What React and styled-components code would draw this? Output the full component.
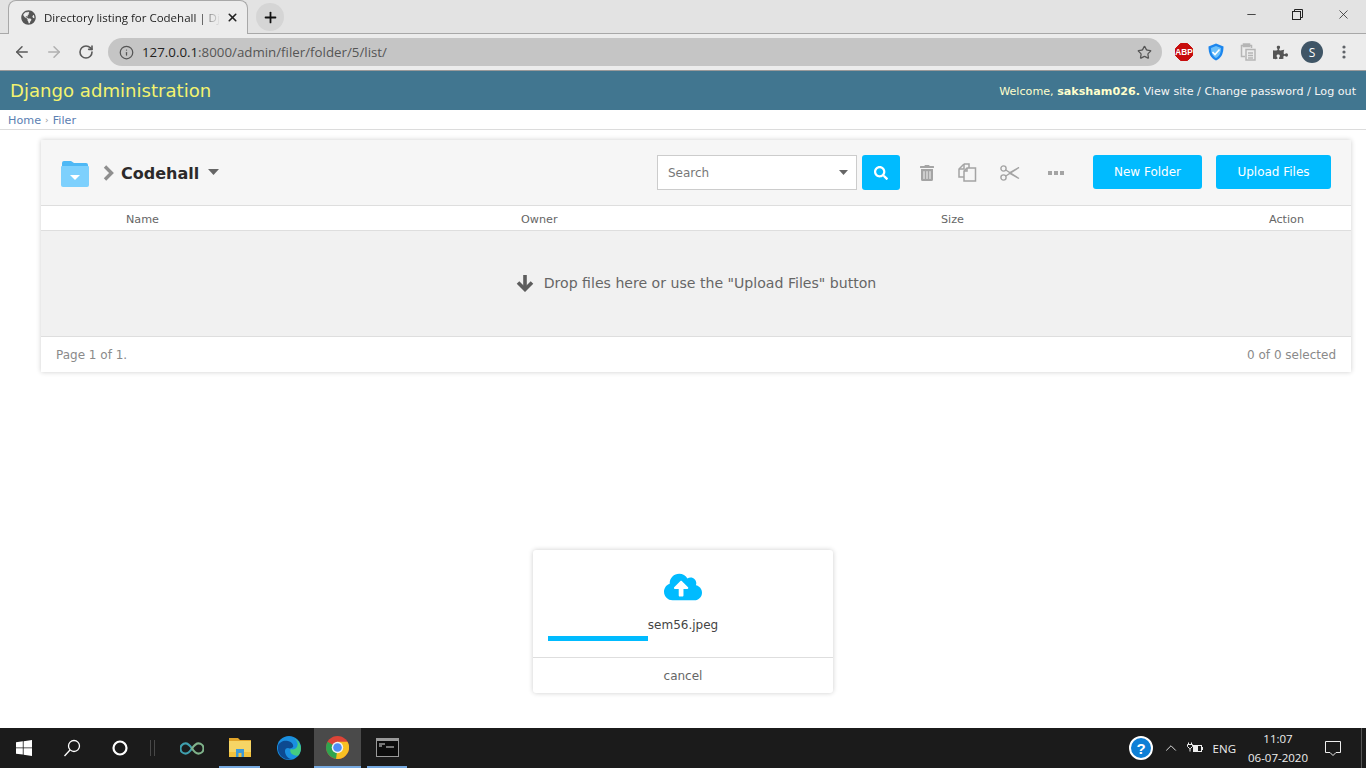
import React from 'react';
import styled, { createGlobalStyle } from 'styled-components';
import { ArrowLeft, ArrowRight, RotateCw, Info, Star, X, Plus, Minus, ChevronUp } from 'lucide-react';
import { FaGlobeAmericas, FaPuzzlePiece, FaTrashAlt, FaSearch, FaCloudUploadAlt } from 'react-icons/fa';

const GlobalStyle = createGlobalStyle`
  html, body { margin: 0; padding: 0; background: #fff; overflow: hidden; }
  * { box-sizing: border-box; }
`;

const Page = styled.div`
  position: relative;
  width: 1366px;
  height: 768px;
  display: flex;
  flex-direction: column;
  font-family: "DejaVu Sans", Verdana, sans-serif;
`;

/* browser chrome */
const TabStrip = styled.div`
  height: 34px;
  background: #e3e3e3;
  border-bottom: 1px solid #a8a8a8;
  display: flex;
  align-items: flex-end;
  padding-left: 8px;
`;
const Tab = styled.div`
  width: 240px;
  height: 34px;
  margin-bottom: -1px;
  background: #ececec;
  border: 1px solid #a8a8a8;
  border-bottom: none;
  border-radius: 8px 8px 0 0;
  display: flex;
  align-items: center;
  padding: 0 8px 0 12px;
  color: #222;
`;
const TabTitle = styled.span`
  flex: 1;
  margin: 0 6px 0 8px;
  font: 11.5px "Open Sans", "Noto Sans", sans-serif;
  white-space: nowrap;
  overflow: hidden;
  mask-image: linear-gradient(to right, #000 88%, transparent);
`;
const NewTab = styled.div`
  width: 28px;
  height: 28px;
  border-radius: 50%;
  background: #d5d5d5;
  margin: 0 0 2px 8px;
  display: flex;
  align-items: center;
  justify-content: center;
  color: #111;
`;
const WindowControls = styled.div`
  margin-left: auto;
  height: 33px;
  display: flex;
  align-items: flex-start;
  color: #222;
`;
const WindowButton = styled.div`
  width: 46px;
  height: 28px;
  display: flex;
  align-items: center;
  justify-content: center;
`;
const Toolbar = styled.div`
  height: 37px;
  background: #ececec;
  border-bottom: 1px solid #9a9a9a;
  display: flex;
  align-items: center;
  padding-left: 6px;
  color: #5f6368;
`;
const NavButton = styled.div`
  width: 32px;
  display: flex;
  justify-content: center;
  color: ${p => (p.$off ? '#b0b0b0' : '#5a5a5a')};
`;
const AddressBar = styled.div`
  width: 1054px;
  height: 28px;
  margin-left: 6px;
  border-radius: 14px;
  background: #c5c5c5;
  display: flex;
  align-items: center;
  padding: 0 10px 0 11px;
  font: 13.3px "Open Sans", "Noto Sans", sans-serif;
  color: #555;
`;
const Url = styled.span`
  flex: 1;
  margin-left: 8px;
  b { font-weight: 400; color: #222; }
`;
const Extensions = styled.div`
  display: flex;
  align-items: center;
  margin-left: 6px;
`;
const ExtSlot = styled.div`
  width: 32px;
  height: 24px;
  display: flex;
  align-items: center;
  justify-content: center;
`;
const Avatar = styled.div`
  width: 22px;
  height: 22px;
  border-radius: 50%;
  background: #3f5566;
  color: #fff;
  font: 12px "Open Sans", sans-serif;
  display: flex;
  align-items: center;
  justify-content: center;
`;

/* django header */
const Header = styled.header`
  height: 39px;
  background: #417690;
  display: flex;
  align-items: center;
  justify-content: space-between;
  padding: 0 10px;
`;
const Brand = styled.div`
  font-size: 18.1px;
  color: #f3f36f;
`;
const UserTools = styled.div`
  padding-top: 1px;
  font-size: 11.15px;
  color: #ffffcc;
  b { font-weight: 700; }
  span { color: #f5f5f5; }
`;
const Breadcrumbs = styled.nav`
  height: 20px;
  padding: 1px 0 0 8px;
  background: #fff;
  border-bottom: 1px solid #dcdcdc;
  display: flex;
  align-items: center;
  font-size: 11.2px;
  color: #5b80b2;
  i { font-style: normal; color: #999; margin: 0 4px; font-size: 9px; }
`;

/* filer panel */
const Main = styled.main`
  flex: 1;
  padding: 10px 15px 0 41px;
`;
const Panel = styled.section`
  background: #fff;
  box-shadow: 0 0 5px rgba(0, 0, 0, 0.2);
`;
const PanelTop = styled.div`
  height: 66px;
  background: #f6f6f6;
  border-bottom: 1px solid #dedede;
  display: flex;
  align-items: center;
  padding: 0 20px 0 19px;
`;
const FolderName = styled.div`
  margin-left: 7px;
  padding-top: 1px;
  font-size: 16px;
  font-weight: 700;
  color: #2c2a2a;
`;
const Chevron = styled.svg`
  margin-left: 13px;
`;
const NameCaret = styled.div`
  margin-left: 9px;
  display: flex;
`;
const Tools = styled.div`
  margin-left: auto;
  align-self: flex-start;
  padding-top: 15px;
  display: flex;
  align-items: flex-start;
`;
const SearchBox = styled.div`
  width: 200px;
  height: 35px;
  background: #fff;
  border: 1px solid #ccc;
  display: flex;
  align-items: center;
  justify-content: space-between;
  padding: 0 8px 0 10px;
  font-size: 12px;
  color: #777;
`;
const SearchButton = styled.div`
  width: 38px;
  height: 35px;
  margin-left: 5px;
  border-radius: 3px;
  background: #00bbff;
  color: #fff;
  display: flex;
  align-items: center;
  justify-content: center;
`;
const IconTools = styled.div`
  height: 35px;
  display: flex;
  align-items: center;
  margin: 0 13px 0 8px;
`;
const IconTool = styled.div`
  width: ${p => p.$w}px;
  display: flex;
  justify-content: center;
  color: #a4a4a4;
`;
const BlueButton = styled.div`
  width: ${p => p.$w}px;
  height: 34px;
  margin-left: ${p => p.$gap || 0}px;
  border-radius: 3px;
  background: #00bbff;
  color: #fff;
  font-size: 12px;
  display: flex;
  align-items: center;
  justify-content: center;
`;
const Columns = styled.div`
  height: 25px;
  padding-top: 2px;
  border-bottom: 1px solid #dedede;
  display: grid;
  grid-template-columns: 85px 395px 420px 328px 1fr;
  align-items: center;
  font-size: 11.2px;
  color: #666;
`;
const DropZone = styled.div`
  height: 106px;
  padding-bottom: 2px;
  background: #f1f1f1;
  border-bottom: 1px solid #dedede;
  display: flex;
  align-items: center;
  justify-content: center;
  gap: 10px;
  font-size: 14.1px;
  color: #666;
`;
const PanelFooter = styled.div`
  height: 35px;
  display: flex;
  align-items: center;
  justify-content: space-between;
  padding: 0 15px;
  font-size: 12px;
  color: #8a8a8a;
`;

/* upload popup, lies over the page */
const UploadCard = styled.div`
  position: absolute;
  left: 533px;
  top: 550px;
  width: 300px;
  height: 143px;
  background: #fff;
  border-radius: 3px;
  box-shadow: 0 0 5px rgba(0, 0, 0, 0.2);
  display: flex;
  flex-direction: column;
`;
const UploadBody = styled.div`
  height: 108px;
  border-bottom: 1px solid #dedede;
  padding: 18px 15px 0;
  display: flex;
  flex-direction: column;
  align-items: center;
  color: #00bbff;
`;
const FileName = styled.div`
  margin-top: 12px;
  font-size: 12px;
  color: #444;
`;
const ProgressTrack = styled.div`
  align-self: stretch;
  height: 5px;
  margin-top: 4px;
`;
const ProgressFill = styled.div`
  height: 100%;
  background: #00bbff;
`;
const Cancel = styled.div`
  flex: 1;
  display: flex;
  align-items: center;
  justify-content: center;
  font-size: 12px;
  color: #666;
`;

/* windows taskbar */
const Taskbar = styled.footer`
  height: 40px;
  background: #1b1b1b;
  display: flex;
  align-items: stretch;
  color: #fff;
`;
const TaskItem = styled.div`
  width: ${p => p.$w || 48}px;
  padding-left: ${p => p.$pad || 0}px;
  display: flex;
  align-items: center;
  justify-content: center;
  background: ${p => (p.$active ? '#4a4a4a' : 'transparent')};
  border-bottom: ${p => (p.$open ? '2px solid #76a9e0' : 'none')};
`;
const TaskSeparator = styled.div`
  width: 21px;
  padding-left: 6px;
  display: flex;
  align-items: center;
  &::before {
    content: '';
    width: 3px;
    height: 16px;
    border-left: 1px solid #484848;
    border-right: 1px solid #484848;
  }
`;
const TaskGap = styled.div`
  width: 6px;
`;
const Tray = styled.div`
  margin-left: auto;
  display: flex;
  align-items: center;
  font: 11.5px "Open Sans", "Noto Sans", sans-serif;
  color: #eee;
`;
const TrayChevron = styled.div`
  width: 32px;
  margin-left: 2px;
  display: flex;
  justify-content: center;
`;
const Lang = styled.span`
  margin-left: 10px;
`;
const Clock = styled.div`
  width: 64px;
  margin-left: 10px;
  text-align: center;
  line-height: 19px;
`;
const ShowDesktop = styled.div`
  width: 1px;
  height: 40px;
  margin: 0 4px 0 5px;
  background: #555;
`;

const FolderIcon = () => (
  <svg width="30" height="30" viewBox="0 0 30 30">
    <path d="M2 5a2 2 0 0 1 2-2h7l3 2h12a2 2 0 0 1 2 2v2H2z" fill="#4eb8f5" />
    <path d="M2 8h26a1 1 0 0 1 1 1v18a2 2 0 0 1-2 2H3a2 2 0 0 1-2-2V9a1 1 0 0 1 1-1z" fill="#7dd0fd" />
    <path d="M10 17h10l-5 5z" fill="#fff" />
  </svg>
);

const CopyIcon = () => (
  <svg width="19" height="19" viewBox="0 0 19 19" fill="none" stroke="#a4a4a4" strokeWidth="1.5">
    <path d="M6 1L1 6v8h5" />
    <path d="M6 1v5H1" />
    <path d="M6 1h5v4" />
    <path d="M9 5h8.500v13H6V8z" />
    <path d="M9 5v3H6" />
  </svg>
);

const ScissorsIcon = () => (
  <svg width="20" height="16" viewBox="0 0 20 16" fill="none" stroke="#a4a4a4" strokeWidth="1.4">
    <circle cx="3.500" cy="3.500" r="2.600" />
    <circle cx="3.500" cy="12.500" r="2.600" />
    <path d="M5.800 5L19 13.500 9 8" />
    <path d="M5.800 11L19 2.500 9 8" />
  </svg>
);

const DotsIcon = () => (
  <svg width="16" height="4" viewBox="0 0 16 4" fill="#a4a4a4">
    <rect width="4" height="4" />
    <rect x="6" width="4" height="4" />
    <rect x="12" width="4" height="4" />
  </svg>
);

const DownArrow = () => (
  <svg width="18" height="18" viewBox="0 0 18 18" fill="none" stroke="#5d5d5d" strokeWidth="3.600">
    <path d="M9 1v14" />
    <path d="M2 8.500l7 7 7-7" />
  </svg>
);

const Caret = ({ w = 11 }) => (
  <svg width={w} height={w * 0.55} viewBox="0 0 10 5.500" fill="#666"><path d="M0 0h10L5 5.500z" /></svg>
);

const RestoreIcon = () => (
  <svg width="11" height="11" viewBox="0 0 11 11" fill="none" stroke="#222">
    <rect x="0.500" y="2.500" width="8" height="8" />
    <path d="M2.500 2.500v-2h8v8h-2" />
  </svg>
);

const AbpIcon = () => (
  <svg width="18" height="18" viewBox="0 0 18 18">
    <path d="M5.500 0.500h7l5 5v7l-5 5h-7l-5-5v-7z" fill="#c70d0d" stroke="#c70d0d" strokeLinejoin="round" />
    <text x="9" y="12.300" textAnchor="middle" fontSize="8.200" fontWeight="700" fill="#fff" fontFamily="Liberation Sans, sans-serif">ABP</text>
  </svg>
);

const ShieldIcon = () => (
  <svg width="18" height="18" viewBox="0 0 18 18">
    <path d="M9 0.500l7.500 3c0 7-2 11.500-7.500 14C3.500 15 1.500 10.500 1.500 3.500z" fill="#1c86ee" />
    <path d="M9 3l5 2c0 5-1.500 8-5 10-3.500-2-5-5-5-10z" fill="#6cc0fa" />
    <path d="M5.500 9l2.500 2.500 4.500-5" fill="none" stroke="#fff" strokeWidth="1.600" />
  </svg>
);

const ClipIcon = () => (
  <svg width="16" height="18" viewBox="0 0 16 18" fill="none" stroke="#b5b5b5" strokeWidth="1.500">
    <path d="M4 2.500H1.500v11H5" />
    <path d="M9 2.500h2.500V5" />
    <rect x="3.500" y="1" width="6" height="2.500" fill="#b5b5b5" />
    <path d="M6 6.500h9v10.500H6zM8 10h5M8 12.500h5M8 15h5" />
  </svg>
);

const KebabIcon = () => (
  <svg width="4" height="14" viewBox="0 0 4 14" fill="#5f6368">
    <circle cx="2" cy="2" r="1.600" />
    <circle cx="2" cy="7" r="1.600" />
    <circle cx="2" cy="12" r="1.600" />
  </svg>
);

const WindowsLogo = () => (
  <svg width="16" height="16" viewBox="0 0 16 16" fill="#fff">
    <path d="M0 2.300L6.800 1.300V7.500H0zM7.600 1.200L16 0V7.500H7.600zM0 8.300H6.800V14.600L0 13.700zM7.600 8.300H16V16L7.600 14.800z" />
  </svg>
);

const SearchGlass = () => (
  <svg width="18" height="18" viewBox="0 0 18 18" fill="none" stroke="#fff" strokeWidth="1.300">
    <circle cx="11" cy="7" r="5.500" />
    <path d="M7 11L1.500 17" />
  </svg>
);

const Cortana = () => (
  <svg width="16" height="16" viewBox="0 0 16 16" fill="none" stroke="#fff" strokeWidth="2.200">
    <circle cx="8" cy="8" r="6.500" />
  </svg>
);

const ArduinoIcon = () => (
  <svg width="24" height="13" viewBox="0 0 26 14" fill="none" strokeWidth="2.400">
    <path d="M13 7C10 2.500 8 1.500 6 1.500a5.500 5.500 0 0 0 0 11c2 0 4-1 7-5.500z" stroke="#3f9fae" />
    <path d="M13 7c3-4.500 5-5.500 7-5.500a5.500 5.500 0 0 1 0 11c-2 0-4-1-7-5.500z" stroke="#7fb28a" />
  </svg>
);

const ExplorerIcon = () => (
  <svg width="22" height="20" viewBox="0 0 22 20">
    <path d="M0 1h9l2 2h11v3H0z" fill="#e2a52a" />
    <path d="M0 4h22v16H0z" fill="#f6d565" />
    <path d="M0 15h22v5H0z" fill="#f2c23d" />
    <path d="M7 12h8v8h-2.500v-4h-3v4H7z" fill="#3d9bd8" />
  </svg>
);

const EdgeIcon = () => (
  <svg width="24" height="24" viewBox="0 0 24 24">
    <circle cx="12" cy="12" r="12" fill="#1a8fe0" />
    <path d="M23.900 13c.4-5-3-10-9-11 5 1 7 5 5 9-1 2-4 3-6 2-1 1-1 3 1 5 3 2 6 2 7 1 1-2 2-4 2-6z" fill="#45cc80" />
    <path d="M1 10c1-4 6-6 10-5 4 1 6 4 5 6-1 1-3 2-5 1-3 0-4 3-2 7 1 2 3 4 6 4-7 2-13-3-14-9z" fill="#0d4a91" />
  </svg>
);

const ChromeIcon = () => (
  <svg width="23" height="23" viewBox="0 0 24 24">
    <circle cx="12" cy="12" r="12" fill="#dc4437" />
    <path d="M1.600 6A12 12 0 0 0 10.500 23.900L16 13 7 9z" fill="#2fa44f" />
    <path d="M10.500 23.900A12 12 0 0 0 22.400 6H12v6z" fill="#f8c022" />
    <circle cx="12" cy="12" r="6" fill="#f2f2f2" />
    <circle cx="12" cy="12" r="4.500" fill="#4f8df5" />
  </svg>
);

const CmdIcon = () => (
  <svg width="23" height="19" viewBox="0 0 23 19">
    <rect x="0.500" y="0.500" width="22" height="18" fill="#0c0c0c" stroke="#9a9a9a" />
    <rect x="1" y="1" width="21" height="2" fill="#9a9a9a" />
    <path d="M3 5.500h6v1H3zM3 7.500h3v1H3zM10 8.500h8v1h-8z" fill="#ddd" />
  </svg>
);

const HelpIcon = () => (
  <svg width="24" height="24" viewBox="0 0 24 24">
    <circle cx="12" cy="12" r="11" fill="#0e7fd6" stroke="#fff" strokeWidth="2" />
    <text x="12" y="17.500" textAnchor="middle" fontSize="15" fontWeight="700" fill="#fff" fontFamily="Liberation Sans, sans-serif">?</text>
  </svg>
);

const BatteryIcon = () => (
  <svg width="16" height="12" viewBox="0 0 16 12" fill="none" stroke="#eee">
    <path d="M1.500 0.500v2M4.500 0.500v2M0.500 2.500h5v2l-2 2-1 0-2-2zM3 6.500v3" />
    <rect x="6.500" y="3.500" width="8" height="6" />
    <rect x="6.500" y="3.500" width="4" height="6" fill="#eee" />
    <path d="M15.500 5v3" />
  </svg>
);

const NotifyIcon = () => (
  <svg width="16" height="15" viewBox="0 0 16 15" fill="none" stroke="#eee">
    <path d="M0.500 0.500h15v11h-4.500l-3 3-3-3H0.500z" />
  </svg>
);

const uploadProgress = 37;

export default function App() {
  return (
    <Page>
      <GlobalStyle />

      <TabStrip>
        <Tab>
          <FaGlobeAmericas size={15} color="#555" />
          <TabTitle>Directory listing for Codehall | Dja</TabTitle>
          <X size={13} strokeWidth={3} />
        </Tab>
        <NewTab><Plus size={17} strokeWidth={2.5} /></NewTab>
        <WindowControls>
          <WindowButton><Minus size={13} strokeWidth={1.5} /></WindowButton>
          <WindowButton><RestoreIcon /></WindowButton>
          <WindowButton><X size={15} strokeWidth={1.2} /></WindowButton>
        </WindowControls>
      </TabStrip>

      <Toolbar>
        <NavButton><ArrowLeft size={18} strokeWidth={2} /></NavButton>
        <NavButton $off><ArrowRight size={18} strokeWidth={2} /></NavButton>
        <NavButton><RotateCw size={16} strokeWidth={2.4} /></NavButton>
        <AddressBar>
          <Info size={15} strokeWidth={2} />
          <Url><b>127.0.0.1</b>:8000/admin/filer/folder/5/list/</Url>
          <Star size={15} strokeWidth={2} />
        </AddressBar>
        <Extensions>
          <ExtSlot><AbpIcon /></ExtSlot>
          <ExtSlot><ShieldIcon /></ExtSlot>
          <ExtSlot><ClipIcon /></ExtSlot>
          <ExtSlot><FaPuzzlePiece size={15} color="#555" /></ExtSlot>
          <ExtSlot><Avatar>S</Avatar></ExtSlot>
          <ExtSlot><KebabIcon /></ExtSlot>
        </Extensions>
      </Toolbar>

      <Header>
        <Brand>Django administration</Brand>
        <UserTools>Welcome, <b>saksham026.</b> <span>View site / Change password / Log out</span></UserTools>
      </Header>
      <Breadcrumbs>Home<i>›</i>Filer</Breadcrumbs>

      <Main>
        <Panel>
          <PanelTop>
            <FolderIcon />
            <Chevron width="11" height="16" viewBox="0 0 11 16" fill="none" stroke="#8f8f8f" strokeWidth="3.400">
              <path d="M2 1.500L8.500 8 2 14.500" />
            </Chevron>
            <FolderName>Codehall</FolderName>
            <NameCaret><Caret /></NameCaret>
            <Tools>
              <SearchBox>Search <Caret w={9} /></SearchBox>
              <SearchButton><FaSearch size={14} /></SearchButton>
              <IconTools>
                <IconTool $w={38}><FaTrashAlt size={16} /></IconTool>
                <IconTool $w={42}><CopyIcon /></IconTool>
                <IconTool $w={44}><ScissorsIcon /></IconTool>
                <IconTool $w={48}><DotsIcon /></IconTool>
              </IconTools>
              <BlueButton $w={109}>New Folder</BlueButton>
              <BlueButton $w={115} $gap={14}>Upload Files</BlueButton>
            </Tools>
          </PanelTop>
          <Columns>
            <span />
            <span>Name</span>
            <span>Owner</span>
            <span>Size</span>
            <span>Action</span>
          </Columns>
          <DropZone>
            <DownArrow />
            Drop files here or use the "Upload Files" button
          </DropZone>
          <PanelFooter>
            <span>Page 1 of 1.</span>
            <span>0 of 0 selected</span>
          </PanelFooter>
        </Panel>
      </Main>

      <UploadCard>
        <UploadBody>
          <FaCloudUploadAlt size={38} />
          <FileName>sem56.jpeg</FileName>
          <ProgressTrack><ProgressFill style={{ width: `${uploadProgress}%` }} /></ProgressTrack>
        </UploadBody>
        <Cancel>cancel</Cancel>
      </UploadCard>

      <Taskbar>
        <TaskItem><WindowsLogo /></TaskItem>
        <TaskItem><SearchGlass /></TaskItem>
        <TaskItem><Cortana /></TaskItem>
        <TaskSeparator />
        <TaskItem $w={54}><ArduinoIcon /></TaskItem>
        <TaskItem $w={41} $open><ExplorerIcon /></TaskItem>
        <TaskItem $w={54} $pad={4}><EdgeIcon /></TaskItem>
        <TaskItem $w={47} $active $open><ChromeIcon /></TaskItem>
        <TaskGap />
        <TaskItem $w={40} $open><CmdIcon /></TaskItem>
        <Tray>
          <HelpIcon />
          <TrayChevron><ChevronUp size={18} strokeWidth={1.2} /></TrayChevron>
          <BatteryIcon />
          <Lang>ENG</Lang>
          <Clock>11:07<br />06-07-2020</Clock>
          <TaskItem $w={46}><NotifyIcon /></TaskItem>
          <ShowDesktop />
        </Tray>
      </Taskbar>
    </Page>
  );
}
